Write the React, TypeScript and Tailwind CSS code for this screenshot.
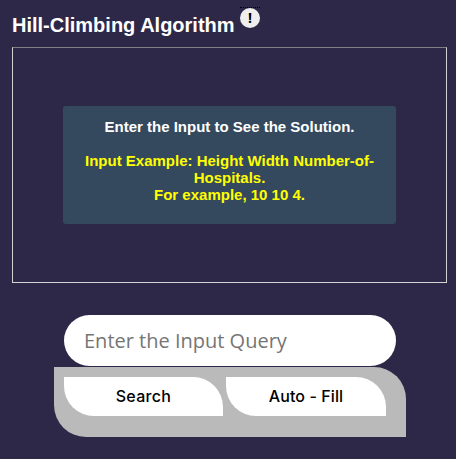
export default function App() {
  return (
    <main className="flex h-[459px] w-[456px] flex-col overflow-hidden bg-[#2d2848] font-['Liberation_Sans',Arial,sans-serif]">
      <header className="flex h-[47px] items-start pl-3">
        <h1 className="mt-[14px] w-[222px] text-[20px] leading-[23px] font-bold whitespace-nowrap text-white">Hill-Climbing Algorithm</h1>
        <div className="mt-[7px] ml-[6px] w-5 border-t border-dotted border-black">
          <div className="flex size-5 items-center justify-center rounded-full bg-[#efefef] font-['Open_Sans',sans-serif] text-[14px] leading-5 font-bold text-black">!</div>
        </div>
      </header>
      <section className="ml-3 flex h-[236px] w-[435px] justify-center border border-[#d3d3d3] border-t-[#808080] pt-[58px]">
        <div className="h-[118px] w-[333px] rounded-[3px] bg-[#34495e] px-5 pt-3 text-center text-[15px] leading-[17px] font-bold text-white">
          <p>Enter the Input to See the Solution.</p>
          <p className="mt-[17px] text-[#ffff00]">
            Input Example: Height Width Number-of-
            <br />
            Hospitals.
            <br />
            For example, 10 10 4.
          </p>
        </div>
      </section>
      <form className="mt-8 ml-[54px] w-[352px]" onSubmit={(event) => event.preventDefault()}>
        <input
          aria-label="Input query"
          placeholder="Enter the Input Query"
          className="ml-[10px] block h-[51px] w-[332px] rounded-[26px] bg-white px-5 font-['Open_Sans',sans-serif] text-[20px] text-black outline-none placeholder:text-[#757575]"
        />
        <div className="mt-px flex h-[70px] gap-[3px] rounded-tr-[32px] rounded-bl-[32px] bg-[#bababa] pt-[10px] pl-[10px] font-['Inter',sans-serif] text-[16px] font-medium text-black">
          <button type="button" className="h-[39px] w-[159px] rounded-tr-[30px] rounded-bl-[30px] bg-white pb-0.5 tracking-[0.3px]">Search</button>
          <button type="button" className="h-[39px] w-[160px] rounded-tr-[30px] rounded-bl-[30px] bg-white pb-0.5 tracking-[0.1px]">Auto - Fill</button>
        </div>
      </form>
    </main>
  );
}
